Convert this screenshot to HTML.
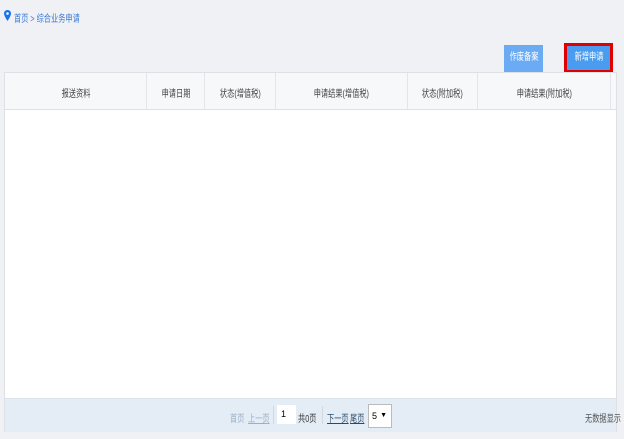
<!DOCTYPE html>
<html><head><meta charset="utf-8"><style>
body{margin:0;width:624px;height:439px;background:#f0f1f5;font-family:"Liberation Sans","Noto Sans CJK SC",sans-serif;font-size:10px;position:relative;overflow:hidden}
.a{position:absolute;white-space:nowrap}
.s{display:inline-block;transform:scaleX(0.72);transform-origin:left center}
.c{display:inline-block;transform:scaleX(0.72);transform-origin:center center}
.bc{left:14px;top:10px;color:#3a7bd5;font-size:10px}
.btn{color:#fff;text-align:center;line-height:26px;font-size:10px}
.h{top:85px;text-align:center;color:#444;font-size:10px}
.f{top:410px;font-size:10px}
</style></head><body>
<svg class="a" style="left:4px;top:10px" width="7" height="11" viewBox="0 0 7 11"><path d="M3.5 0C1.5 0 0 1.5 0 3.5 0 6 3.5 11 3.5 11S7 6 7 3.5C7 1.5 5.5 0 3.5 0z" fill="#1a73e8"/><circle cx="3.5" cy="3.5" r="1.3" fill="#fff"/></svg>
<div class="a bc"><span class="s">首页 &gt; 综合业务申请</span></div>
<div class="a btn" style="left:504px;top:45px;width:39px;height:27px;background:#6aabf4"><span class="c">作废备案</span></div>
<div class="a" style="left:564px;top:43px;width:49px;height:30px;background:#e00000"></div>
<div class="a btn" style="left:567px;top:46px;width:43px;height:24px;line-height:24px;background:#4a9cf0"><span class="c">新增申请</span></div>
<div class="a" style="left:4px;top:72px;width:613px;height:360px;background:#fff;border:1px solid #dde1e6;box-sizing:border-box"></div>
<div class="a" style="left:5px;top:73px;width:611px;height:36px;background:#f7f8fa;border-bottom:1px solid #dde1e6"></div>
<div class="a" style="left:146px;top:73px;width:1px;height:36px;background:#e2e5ea"></div>
<div class="a" style="left:204px;top:73px;width:1px;height:36px;background:#e2e5ea"></div>
<div class="a" style="left:275px;top:73px;width:1px;height:36px;background:#e2e5ea"></div>
<div class="a" style="left:407px;top:73px;width:1px;height:36px;background:#e2e5ea"></div>
<div class="a" style="left:477px;top:73px;width:1px;height:36px;background:#e2e5ea"></div>
<div class="a" style="left:610px;top:73px;width:1px;height:36px;background:#e2e5ea"></div>
<div class="a h" style="left:5px;width:141px"><span class="c">报送资料</span></div>
<div class="a h" style="left:147px;width:57px"><span class="c">申请日期</span></div>
<div class="a h" style="left:205px;width:70px"><span class="c">状态(增值税)</span></div>
<div class="a h" style="left:276px;width:131px"><span class="c">申请结果(增值税)</span></div>
<div class="a h" style="left:408px;width:69px"><span class="c">状态(附加税)</span></div>
<div class="a h" style="left:478px;width:132px"><span class="c">申请结果(附加税)</span></div>
<div class="a" style="left:5px;top:398px;width:611px;height:33px;background:#e4edf5;border-top:1px solid #dde3ea"></div>
<div class="a f" style="left:230px;color:#9ab0c8"><span class="s">首页</span></div>
<div class="a f" style="left:248px;color:#9ab0c8"><span class="s" style="text-decoration:underline">上一页</span></div>
<div class="a" style="left:273px;top:406px;width:1px;height:18px;background:#d0d8e0"></div>
<div class="a" style="left:277px;top:405px;width:19px;height:19px;background:#fff;font-size:9px;line-height:19px;text-indent:4px">1</div>
<div class="a f" style="left:298px;color:#333"><span class="s">共0页</span></div>
<div class="a" style="left:322px;top:406px;width:1px;height:18px;background:#d0d8e0"></div>
<div class="a f" style="left:327px;color:#2a4a6a"><span class="s" style="text-decoration:underline">下一页</span></div>
<div class="a f" style="left:350px;color:#2a4a6a"><span class="s" style="text-decoration:underline">尾页</span></div>
<div class="a" style="left:368px;top:404px;width:24px;height:24px;background:#fff;border:1px solid #bbb;box-sizing:border-box;font-size:9px;line-height:22px;padding-left:3px">5<span style="position:absolute;right:4px;font-size:7px">▼</span></div>
<div class="a f" style="left:585px;color:#555"><span class="s">无数据显示</span></div>
</body></html>
